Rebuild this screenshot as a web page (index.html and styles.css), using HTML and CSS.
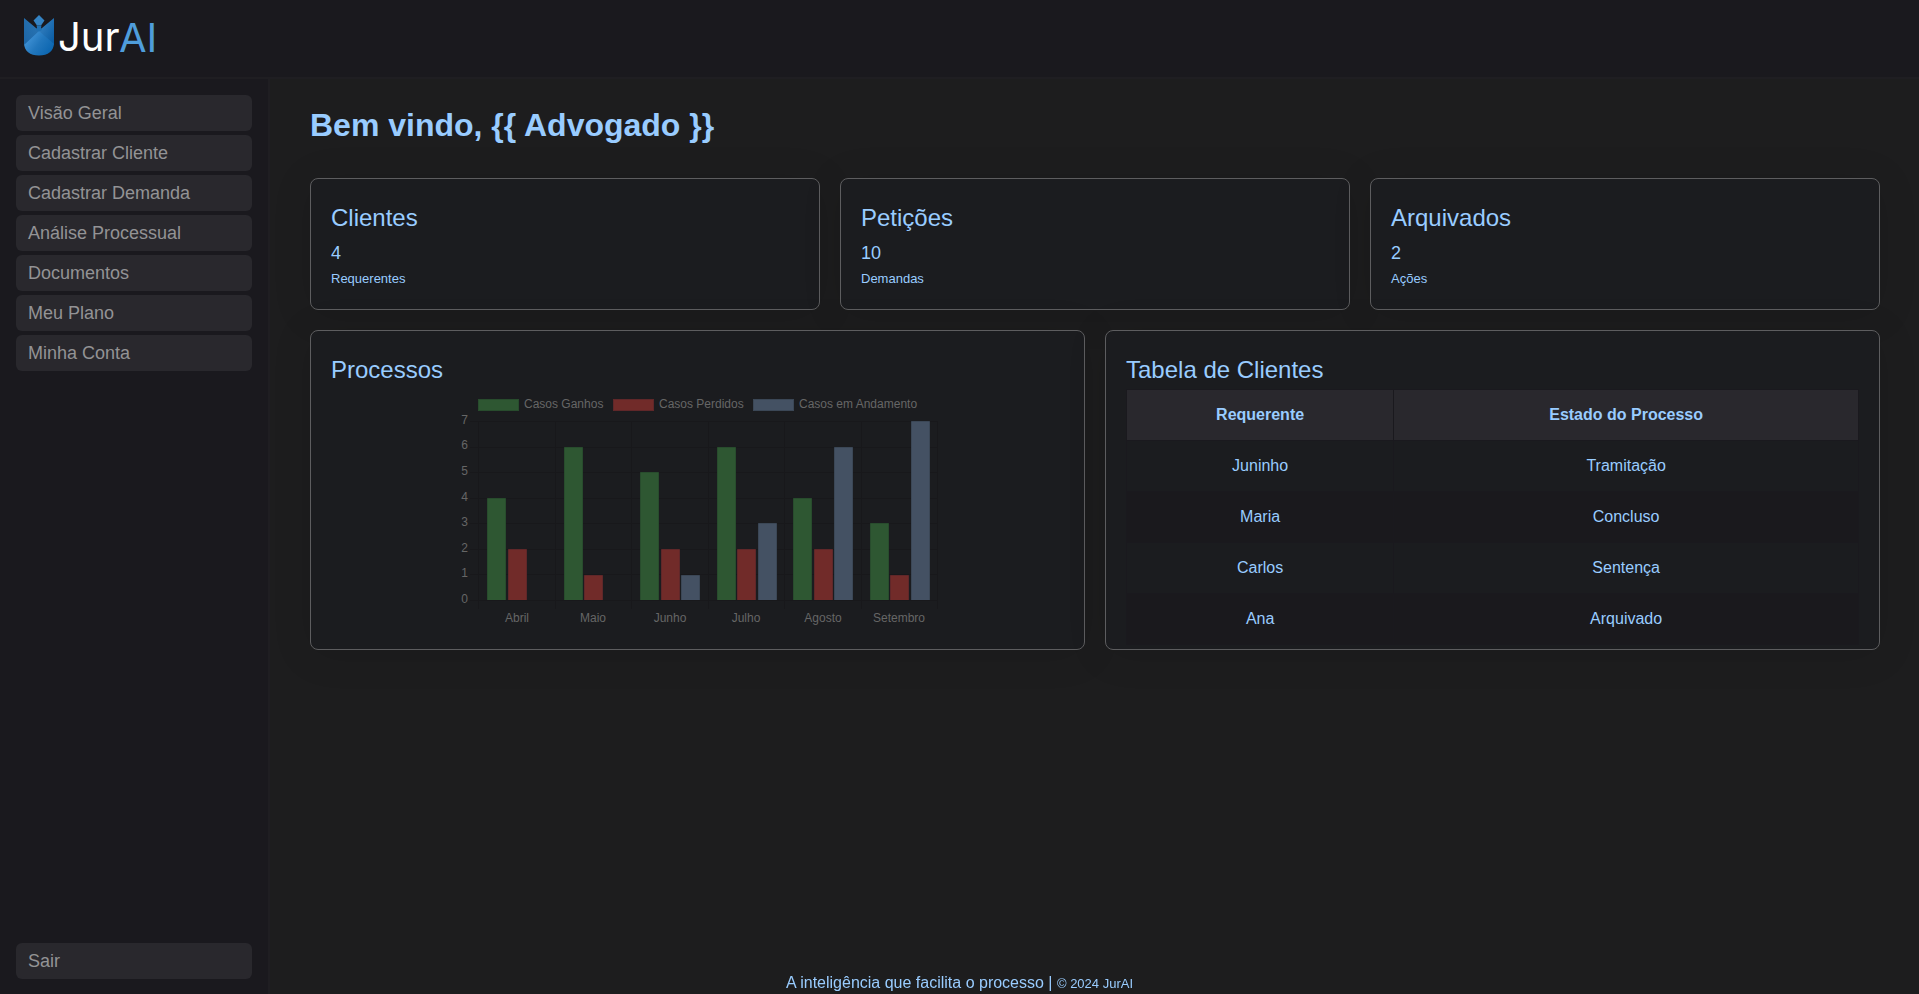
FILE: index.html
```html
<!DOCTYPE html>
<html lang="pt-BR">
<head>
  <meta charset="utf-8">
  <meta name="viewport" content="width=device-width, initial-scale=1">
  <title>JurAI</title>
  <link rel="stylesheet" href="styles.css">
</head>
<body>
  <header class="topbar">
    <a class="logo" href="#" aria-label="JurAI">
      <svg class="logo-art" width="144" height="48" viewBox="0 0 144 48" aria-hidden="true">
        <defs>
          <linearGradient id="shield" x1="0" y1="0" x2="1" y2="1">
            <stop offset="0" stop-color="#3c87c6"/>
            <stop offset="1" stop-color="#0558a0"/>
          </linearGradient>
          <linearGradient id="base" x1="0" y1="0.2" x2="1" y2="0.8">
            <stop offset="0" stop-color="#4a9add"/>
            <stop offset="0.5" stop-color="#2277bd"/>
            <stop offset="1" stop-color="#0863ae"/>
          </linearGradient>
          <linearGradient id="wing" x1="1" y1="0" x2="0" y2="1">
            <stop offset="0" stop-color="#2b76b5"/>
            <stop offset="1" stop-color="#1c65a5"/>
          </linearGradient>
        </defs>
        <path d="M0 4 L12 14 L15 16 L15 24 L0 31 Z" fill="url(#wing)"/>
        <path d="M30 4 L18 14 L15 16 L15 24 L30 31 Z" fill="url(#shield)"/>
        <path d="M15 17 L0 31 L0 29 C0 37 6 41.500 15 41.500 C24 41.500 30 37 30 29 L30 30 Z" fill="url(#base)"/>
        <path d="M15 1 L20.500 6.500 L17 11.500 L13 11.500 L9.500 6.500 Z" fill="#3483c4"/>
        <path d="M12.500 11.500 H17.500 L17 14 L18 16 L15 17.500 L12 16 L13 14 Z" fill="#1f70b3"/>
        <text class="logo-jur" x="34" y="37">Jur</text>
        <text class="logo-ai" x="95" y="38">AI</text>
      </svg>
    </a>
  </header>

  <div class="shell">
    <nav class="sidebar" aria-label="Menu principal">
      <a class="nav-item" href="#">Visão Geral</a>
      <a class="nav-item" href="#">Cadastrar Cliente</a>
      <a class="nav-item" href="#">Cadastrar Demanda</a>
      <a class="nav-item" href="#">Análise Processual</a>
      <a class="nav-item" href="#">Documentos</a>
      <a class="nav-item" href="#">Meu Plano</a>
      <a class="nav-item" href="#">Minha Conta</a>
      <a class="nav-item nav-exit" href="#">Sair</a>
    </nav>

    <main class="content">
      <h1 class="welcome">Bem vindo, {{ Advogado }}</h1>

      <div class="row row-stats">
        <section class="card">
          <h2 class="card-title">Clientes</h2>
          <p class="stat">4</p>
          <p class="caption">Requerentes</p>
        </section>
        <section class="card">
          <h2 class="card-title">Petições</h2>
          <p class="stat">10</p>
          <p class="caption">Demandas</p>
        </section>
        <section class="card">
          <h2 class="card-title">Arquivados</h2>
          <p class="stat">2</p>
          <p class="caption">Ações</p>
        </section>
      </div>

      <div class="row row-panels">
        <section class="card panel">
          <h2 class="card-title">Processos</h2>
          <svg class="chart" width="480" height="239" viewBox="0 1 480 239" role="img" aria-label="Casos por mês">
            <g class="grid">
              <path d="M12 33.500H480M12 59.500H480M12 84.500H480M12 110.500H480M12 135.500H480M12 161.500H480M12 186.500H480M12 212.500H480"/>
              <path d="M20.500 33V221M97.500 33V221M173.500 33V221M250.500 33V221M326.500 33V221M403.500 33V221M479.500 33V221"/>
            </g>
            <g class="won">
              <rect x="20.500" y="11.500" width="40" height="11"/>
              <path d="M29.500 212V110.500H47.500V212M106.500 212V59.500H124.500V212M182.500 212V84.500H200.500V212M259.500 212V59.500H277.500V212M335.500 212V110.500H353.500V212M412.500 212V135.500H430.500V212"/>
            </g>
            <g class="lost">
              <rect x="155.500" y="11.500" width="40" height="11"/>
              <path d="M50.500 212V161.500H68.500V212M126.500 212V187.500H144.500V212M203.500 212V161.500H221.500V212M279.500 212V161.500H297.500V212M356.500 212V161.500H374.500V212M432.500 212V187.500H450.500V212"/>
            </g>
            <g class="open">
              <rect x="295.500" y="11.500" width="40" height="11"/>
              <path d="M223.500 212V187.500H241.500V212M300.500 212V135.500H318.500V212M376.500 212V59.500H394.500V212M453.500 212V33.500H471.500V212"/>
            </g>
            <g class="labels">
              <text x="66" y="20">Casos Ganhos</text>
              <text x="201" y="20">Casos Perdidos</text>
              <text x="341" y="20">Casos em Andamento</text>
            </g>
            <g class="labels labels-y">
              <text x="10" y="36">7</text>
              <text x="10" y="61">6</text>
              <text x="10" y="87">5</text>
              <text x="10" y="113">4</text>
              <text x="10" y="138">3</text>
              <text x="10" y="164">2</text>
              <text x="10" y="189">1</text>
              <text x="10" y="215">0</text>
            </g>
            <g class="labels labels-x">
              <text x="59" y="234">Abril</text>
              <text x="135" y="234">Maio</text>
              <text x="212" y="234">Junho</text>
              <text x="288" y="234">Julho</text>
              <text x="365" y="234">Agosto</text>
              <text x="441" y="234">Setembro</text>
            </g>
          </svg>
        </section>

        <section class="card panel">
          <h2 class="card-title">Tabela de Clientes</h2>
          <table class="clients">
            <thead>
              <tr><th scope="col">Requerente</th><th scope="col">Estado do Processo</th></tr>
            </thead>
            <tbody>
              <tr><td>Juninho</td><td>Tramitação</td></tr>
              <tr><td>Maria</td><td>Concluso</td></tr>
              <tr><td>Carlos</td><td>Sentença</td></tr>
              <tr><td>Ana</td><td>Arquivado</td></tr>
            </tbody>
          </table>
        </section>
      </div>
    </main>
  </div>

  <footer class="footer">A inteligência que facilita o processo | <small class="copyright">© 2024 JurAI</small></footer>
</body>
</html>
```
FILE: styles.css
```css
:root {
  --page: #1d1d1e;
  --bar: #1a191e;
  --line: #1f1e22;
  --item: #29282d;
  --accent: #99ccff;
  --muted: #939395;
}

* {
  box-sizing: border-box;
}

body {
  margin: 0;
  min-height: 100vh;
  display: flex;
  flex-direction: column;
  background: var(--page);
  color: var(--accent);
  font-family: "Liberation Sans", Arial, sans-serif;
  font-size: 16px;
}

.topbar {
  padding: 14px 24px 15px;
  background: var(--bar);
  border-bottom: 2px solid var(--line);
}

.logo,
.logo-art,
.chart {
  display: block;
}

.logo {
  width: 144px;
}

.logo-art {
  overflow: visible;
}

.logo-jur,
.logo-ai {
  font-family: Inter, "Open Sans", sans-serif;
  font-size: 40px;
}

.logo-jur {
  fill: #fff;
}

.logo-ai {
  fill: #4f9ddb;
}

.shell {
  flex: 1;
  display: flex;
}

.sidebar {
  flex: 0 0 270px;
  display: flex;
  flex-direction: column;
  gap: 4px;
  padding: 16px 16px 15px;
  background: var(--bar);
  border-right: 2px solid var(--line);
}

.nav-item {
  padding: 0 12px;
  border-radius: 6px;
  background: var(--item);
  color: var(--muted);
  font-size: 18px;
  line-height: 36px;
  text-decoration: none;
}

.nav-exit {
  margin-top: auto;
}

.content {
  flex: 1;
  min-width: 0;
  padding: 26px 39px 40px 40px;
}

.welcome {
  margin: 0 0 33px;
  font-size: 32px;
  line-height: 40px;
}

.row {
  display: grid;
  gap: 20px;
}

.row-stats {
  grid-template-columns: repeat(3, 1fr);
  margin-bottom: 20px;
}

.row-panels {
  grid-template-columns: repeat(2, 1fr);
}

.card {
  padding: 20px;
  border: 1px solid #5d5d5f;
  border-radius: 8px;
  background: #1b1c1f;
  box-shadow: 0 4px 40px rgba(0, 0, 0, 0.1);
}

.panel {
  height: 320px;
  overflow: hidden;
}

.card-title {
  margin: 0;
  font-size: 24px;
  font-weight: 400;
  line-height: 38px;
}

.stat {
  margin: 0;
  font-size: 18px;
  line-height: 32px;
}

.caption {
  margin: 0;
  font-size: 13px;
  line-height: 20px;
}

.chart {
  margin: 0 auto;
}

.grid path {
  fill: none;
  stroke: #18181b;
}

.won {
  fill: #2e5732;
  stroke: #284c2d;
}

.lost {
  fill: #712b29;
  stroke: #602729;
}

.open {
  fill: #445163;
  stroke: #3b4756;
}

.labels {
  fill: #666;
  stroke: none;
  font-size: 12px;
}

.labels-y {
  text-anchor: end;
}

.labels-x {
  text-anchor: middle;
}

.clients {
  width: 100%;
  border-collapse: collapse;
  text-align: center;
  line-height: 18px;
}

.clients th,
.clients td {
  padding: 16px 0;
  border: 1px solid #1a191e;
}

.clients th {
  background: var(--item);
}

.clients tbody tr:nth-child(even) {
  background: #1a191d;
}

.footer {
  position: fixed;
  right: 0;
  bottom: 0;
  left: 0;
  line-height: 20px;
  text-align: center;
  pointer-events: none;
}

.copyright {
  font-size: 13px;
}
```
